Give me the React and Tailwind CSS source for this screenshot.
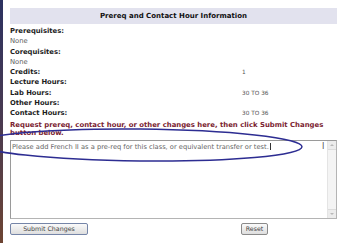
import { Fragment } from 'react'

const rows = [
  { label: 'Prerequisites:', value: null, sub: 'None' },
  { label: 'Corequisites:', value: null, sub: 'None' },
  { label: 'Credits:', value: '1' },
  { label: 'Lecture Hours:', value: '' },
  { label: 'Lab Hours:', value: '30 TO 36' },
  { label: 'Other Hours:', value: '' },
  { label: 'Contact Hours:', value: '30 TO 36' },
]

function FakeScrollbar() {
  return (
    <div className="flex w-[9px] flex-col border-l border-[#e4e4e4] bg-[#f4f4f4]">
      <div className="flex h-[9px] items-center justify-center border-b border-[#dcdcdc] bg-[#ececec]">
        <div className="h-0 w-0 border-x-[2px] border-b-[2px] border-x-transparent border-b-[#b8b8b8]" />
      </div>
      <div className="flex-1" />
      <div className="flex h-[9px] items-center justify-center border-t border-[#dcdcdc] bg-[#ececec]">
        <div className="h-0 w-0 border-x-[2px] border-t-[2px] border-x-transparent border-t-[#b8b8b8]" />
      </div>
    </div>
  )
}

export default function App() {
  return (
    <div className="relative flex h-[243px] w-[350px] overflow-hidden bg-white font-['DejaVu_Sans',Verdana,sans-serif]">
      <div className="w-[3px] bg-gradient-to-b from-[#2c3160] via-[#4a3a50] to-[#6d4432]" />

      <div className="ml-[7px] w-[327px]">
        <div className="mt-[8px] flex h-[16px] items-center justify-center bg-[#e2e2ee] text-[7px] font-bold text-[#111]">
          Prereq and Contact Hour Information
        </div>

        <div className="mt-[2px] grid grid-cols-[232px_1fr] leading-[10.3px]">
          {rows.map((r) => (
            <Fragment key={r.label}>
              <div className="text-[6.8px] font-bold text-[#1c1c1c]">{r.label}</div>
              <div className="text-[5.8px] text-[#555]">{r.value}</div>
              {r.sub && (
                <>
                  <div className="text-[6.8px] text-[#5c5c5c]">{r.sub}</div>
                  <div />
                </>
              )}
            </Fragment>
          ))}
        </div>

        <p className="mt-[2px] text-[6.9px] font-bold leading-[8.3px] text-[#7a2230]">
          Request prereq, contact hour, or other changes here, then click Submit Changes button below.
        </p>

        <div className="relative mt-[3px] flex h-[79px] border border-[#b4b4b4] border-t-[#9a9a9a] border-l-[#9a9a9a]">
          <div className="flex-1 px-[1px] pt-[1px] text-[6.7px] leading-[8px] text-[#666]">
            Please add French II as a pre-req for this class, or equivalent transfer or test.
            <span className="ml-[1px] inline-block h-[7px] w-px translate-y-[1px] bg-[#333]" />
          </div>
          <div className="absolute left-[311px] top-[2px] text-[8px] leading-[8px] text-[#555]">I</div>
          <FakeScrollbar />
        </div>

        <div className="mt-[4px] grid grid-cols-[231px_1fr] leading-none">
          <div className="flex">
            <button className="h-[12px] w-[78px] rounded-[2px] border border-[#7585a8] bg-gradient-to-b from-[#fafafa] to-[#dedede] text-[6.3px] leading-[10px] text-[#444]">
              Submit Changes
            </button>
          </div>
          <div className="flex">
            <button className="h-[12px] w-[27px] rounded-[2px] border border-[#8a8a8a] bg-gradient-to-b from-[#fafafa] to-[#dedede] text-[6.3px] leading-[10px] text-[#444]">
              Reset
            </button>
          </div>
        </div>
      </div>

      <svg className="pointer-events-none absolute left-0 top-0" width="350" height="243" viewBox="0 0 350 243">
        <ellipse cx="140" cy="145" rx="162" ry="16" fill="none" stroke="#2d2d92" strokeWidth="1.5" transform="rotate(0.6 140 145)" />
      </svg>
    </div>
  )
}
